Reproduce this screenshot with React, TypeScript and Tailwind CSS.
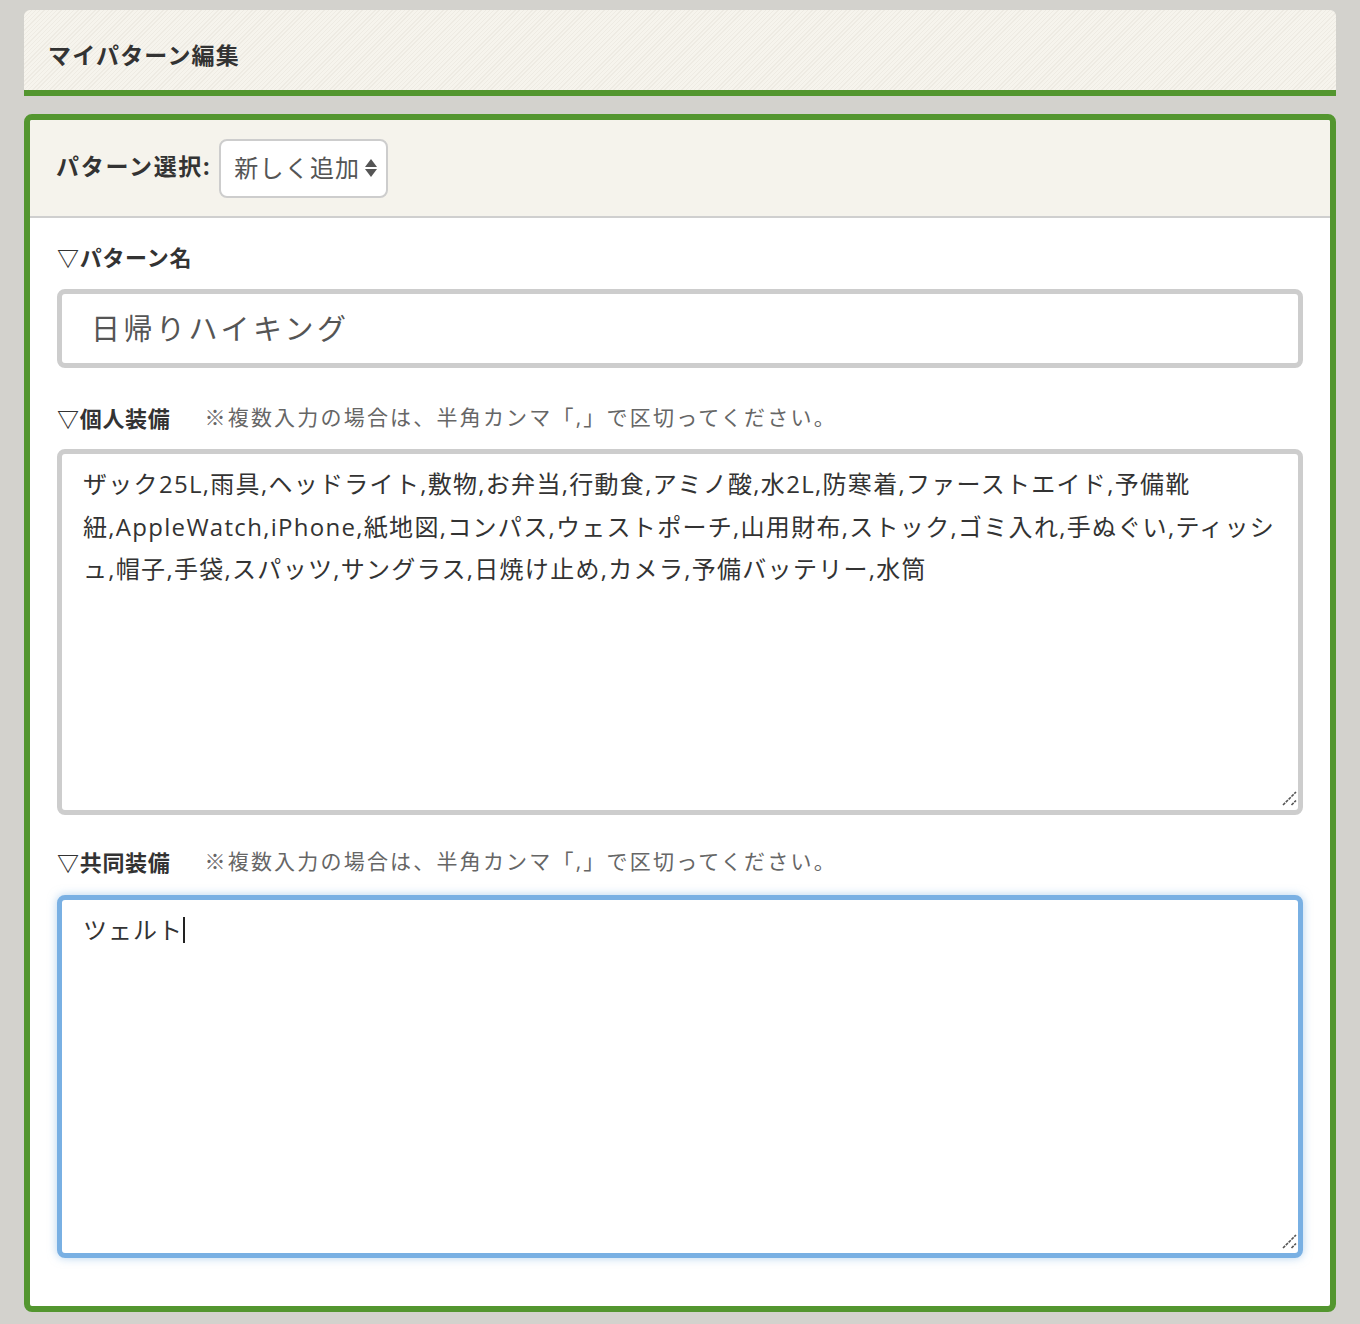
import React from "react";

const FONT = {
  fontFamily: '"Open Sans", "Noto Sans CJK JP", sans-serif',
};

const NOTE = "※複数入力の場合は、半角カンマ「,」で区切ってください。";

const personalLines = [
  "ザック25L,雨具,ヘッドライト,敷物,お弁当,行動食,アミノ酸,水2L,防寒着,ファーストエイド,予備靴",
  "紐,AppleWatch,iPhone,紙地図,コンパス,ウェストポーチ,山用財布,ストック,ゴミ入れ,手ぬぐい,ティッシ",
  "ュ,帽子,手袋,スパッツ,サングラス,日焼け止め,カメラ,予備バッテリー,水筒",
];

function ResizeGrip() {
  return (
    <svg
      className="absolute right-[1px] bottom-[4px]"
      width="15"
      height="15"
      viewBox="0 0 15 15"
    >
      <path d="M1 14 L14 1" stroke="#555" strokeWidth="1.6" strokeDasharray="3 1" />
      <path d="M9.5 14 L14 9.5" stroke="#555" strokeWidth="1.6" strokeDasharray="3 1" />
    </svg>
  );
}

function SectionLabel({ title, note }: { title: string; note?: string }) {
  return (
    <div className="flex items-center h-[30px]">
      <span className="text-[22px] font-bold tracking-[0.7px] text-[#333]">▽{title}</span>
      {note && (
        <span className="ml-[34px] text-[21px] tracking-[2.2px] text-[#666]">{note}</span>
      )}
    </div>
  );
}

export default function App() {
  return (
    <div className="min-h-screen bg-[#d3d2cd] px-[24px] pt-[10px] pb-[12px]" style={FONT}>
      {/* Header */}
      <div className="h-[86px] rounded-t-[6px] border-b-[6px] border-[#53962f] bg-[repeating-linear-gradient(135deg,#f6f4ed_0px,#f6f4ed_2px,#eeebe3_2px,#eeebe3_3px)] flex items-center pl-[24px] pt-[10px]">
        <h1 className="text-[23px] font-bold tracking-[1.2px] text-[#333]">マイパターン編集</h1>
      </div>

      {/* Main card */}
      <div className="mt-[18px] border-[6px] border-[#53962f] rounded-[8px] overflow-hidden bg-white">
        <div className="h-[98px] bg-[#f5f3ec] border-b-2 border-[#cfcfcf] flex items-center pl-[26px]">
          <span className="text-[23px] font-bold tracking-[1.7px] text-[#333] -mt-[4px]">パターン選択:</span>
          <div className="ml-[8px] w-[169px] h-[59px] rounded-[8px] border-2 border-[#cdcdcd] bg-white flex items-center pl-[13px] pr-[9px] justify-between">
            <span className="text-[24px] tracking-[1.2px] text-[#555]">新しく追加</span>
            <span className="flex flex-col items-center gap-[2px]">
              <svg width="12" height="8" viewBox="0 0 12 8">
                <path d="M6 0 L12 8 L0 8 Z" fill="#555" />
              </svg>
              <svg width="12" height="8" viewBox="0 0 12 8">
                <path d="M0 0 L12 0 L6 8 Z" fill="#555" />
              </svg>
            </span>
          </div>
        </div>

        <div className="px-[27px] pt-[24px] pb-[48px]">
          <SectionLabel title="パターン名" />
          <div className="mt-[17px] h-[79px] rounded-[8px] border-[5px] border-[#cdcdcd] bg-white flex items-center pl-[29px]">
            <span className="text-[29px] tracking-[3.5px] text-[#555]">日帰りハイキング</span>
          </div>

          <div className="mt-[35px]">
            <SectionLabel title="個人装備" note={NOTE} />
          </div>
          <div className="relative mt-[16px] h-[366px] rounded-[8px] border-[5px] border-[#cdcdcd] bg-white pl-[21px] pt-[9px]">
            {personalLines.map((line) => (
              <div
                key={line}
                className="whitespace-nowrap text-[24px] tracking-[1.3px] leading-[42.5px] text-[#333]"
              >
                {line}
              </div>
            ))}
            <ResizeGrip />
          </div>

          <div className="mt-[32px]">
            <SectionLabel title="共同装備" note={NOTE} />
          </div>
          <div className="relative mt-[18px] h-[363px] rounded-[8px] border-[5px] border-[#79b0e3] bg-white pl-[21px] pt-[9px] shadow-[0_0_10px_rgba(120,174,224,0.55)]">
            <div className="flex items-center text-[24px] tracking-[1px] leading-[42.5px] text-[#333]">
              <span>ツェルト</span>
              <span className="inline-block w-[2px] h-[26px] bg-[#222]" />
            </div>
            <ResizeGrip />
          </div>
        </div>
      </div>
    </div>
  );
}
